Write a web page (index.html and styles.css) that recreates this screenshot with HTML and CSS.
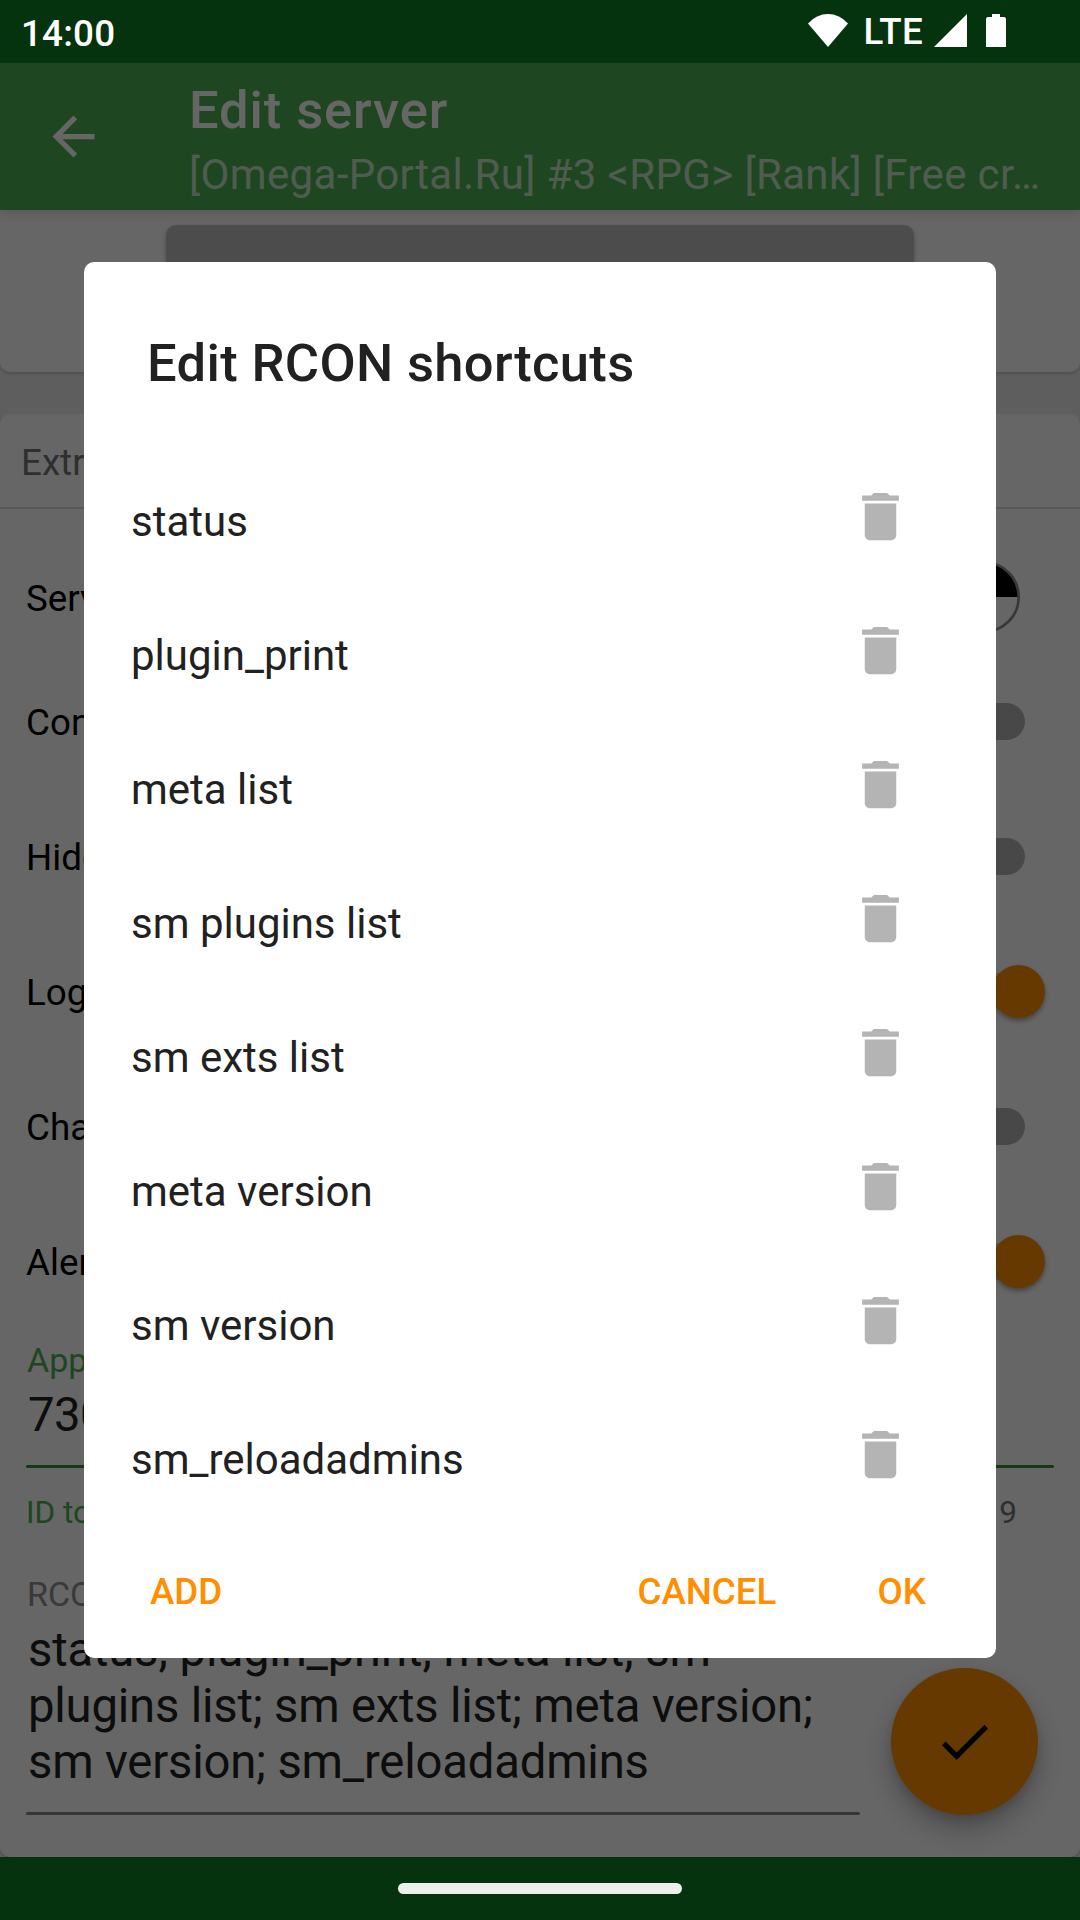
FILE: index.html
```html
<!DOCTYPE html>
<html lang="en">
<head>
<meta charset="utf-8">
<title>Edit server</title>
<link rel="stylesheet" href="styles.css">
</head>
<body>
<svg class="defs" width="0" height="0" aria-hidden="true">
  <symbol id="trash" viewBox="0 0 24 24"><path d="M6 19c0 1.1.9 2 2 2h8c1.1 0 2-.9 2-2V7H6v12zM19 4h-3.5l-1-1h-5l-1 1H5v2h14V4z"/></symbol>
</svg>
<div class="screen">
  <header class="status">
    <span class="clock">14:00</span>
    <svg class="wifi" width="40" height="33" viewBox="0 0 40 33"><path d="M0 9.500Q8.500 0 20 0T40 9.500L20 33z"/></svg>
    <span class="lte">LTE</span>
    <svg class="signal" width="33" height="33" viewBox="0 0 33 33"><path d="M0 33H33V0z"/></svg>
    <svg class="battery" width="20" height="33" viewBox="0 0 20 33"><path d="M6 0h8v3h4q2 0 2 2v28H0V5q0-2 2-2h4z"/></svg>
  </header>
  <div class="app">
    <div class="appbar">
      <svg class="back" viewBox="0 0 24 24"><path d="M20 11H7.830l5.590-5.590L12 4l-8 8 8 8 1.410-1.410L7.830 13H20v-2z"/></svg>
      <div class="heading">
        <div class="heading-title">Edit server</div>
        <div class="heading-sub">[Omega-Portal.Ru] #3 &lt;RPG&gt; [Rank] [Free cr…</div>
      </div>
    </div>
    <section class="card card-top"><div class="wide-button"></div></section>
    <section class="card card-extra">
      <h2 class="card-title">Extra</h2>
      <div class="settings">
        <div class="setting setting-color"><span>Server</span>
          <svg class="swatch" width="72" height="72" viewBox="0 0 72 72"><path d="M36 36V2A34 34 0 0 1 70 36z"/><circle cx="36" cy="36" r="34.700" fill="none" stroke="#8c8c8c" stroke-width="2.600"/></svg>
        </div>
        <div class="setting"><span>Connect</span><i class="switch"></i></div>
        <div class="setting"><span>Hide</span><i class="switch"></i></div>
        <div class="setting"><span>Log</span><i class="switch on"></i></div>
        <div class="setting"><span>Chat</span><i class="switch"></i></div>
        <div class="setting"><span>Alert</span><i class="switch on"></i></div>
      </div>
      <div class="field">
        <div class="label active">App</div>
        <div class="value">730</div>
        <div class="line active"></div>
        <div class="helper"><span>ID to</span><span class="count">9</span></div>
      </div>
      <div class="field field-rcon">
        <div class="label">RCON</div>
        <div class="value multi">status; plugin_print; meta list; sm plugins list; sm exts list; meta version; sm version; sm_reloadadmins</div>
        <div class="line"></div>
      </div>
    </section>
    <div class="fab"><svg viewBox="0 0 24 24"><path d="M9 16.170L4.830 12l-1.420 1.410L9 19 21 7l-1.410-1.410z"/></svg></div>
    <div class="scrim"></div>
  </div>
  <footer class="nav"><div class="handle"></div></footer>
  <div class="dialog">
    <h1 class="dialog-title">Edit RCON shortcuts</h1>
    <ul class="list">
      <li><span>status</span><svg><use href="#trash"/></svg></li>
      <li><span>plugin_print</span><svg><use href="#trash"/></svg></li>
      <li><span>meta list</span><svg><use href="#trash"/></svg></li>
      <li><span>sm plugins list</span><svg><use href="#trash"/></svg></li>
      <li><span>sm exts list</span><svg><use href="#trash"/></svg></li>
      <li><span>meta version</span><svg><use href="#trash"/></svg></li>
      <li><span>sm version</span><svg><use href="#trash"/></svg></li>
      <li><span>sm_reloadadmins</span><svg><use href="#trash"/></svg></li>
    </ul>
    <div class="actions"><span class="add">ADD</span><span class="cancel">CANCEL</span><span>OK</span></div>
  </div>
</div>
</body>
</html>
```
FILE: styles.css
```css
* { box-sizing: border-box; margin: 0; padding: 0; }
body { width: 1080px; height: 1920px; overflow: hidden; font-family: Roboto, sans-serif; }
svg { display: block; flex: none; }
.defs { position: absolute; }
.screen { position: relative; width: 1080px; height: 1920px; display: flex; flex-direction: column; }

/* system bars */
.status { height: 63px; background: #04330e; display: flex; align-items: flex-start; padding: 14px 74px 0 21px; color: #fff; fill: #fff; font-size: 36.750px; font-weight: 500; }
.clock { line-height: 39px; flex: 1; letter-spacing: .2px; }
.lte { line-height: 36px; margin: 0 11px 0 16px; letter-spacing: .3px; }
.signal { margin-right: 19px; }
.nav { height: 63px; background: #04330e; display: flex; justify-content: center; padding-top: 26px; }
.handle { width: 284px; height: 11px; border-radius: 6px; background: #ecefec; }

/* dimmed application */
.app { position: relative; height: 1794px; background: #ebebeb; overflow: hidden; }
.scrim { position: absolute; inset: 0; background: rgba(0,0,0,.6); }
.appbar { position: relative; height: 147px; background: #4caf50; display: flex; padding-left: 42px; box-shadow: 0 2px 12px rgba(0,0,0,.18); color: #fff; white-space: nowrap; }
.back { width: 63px; height: 63px; margin-top: 42px; margin-right: 84px; fill: #fff; }
.heading { padding-top: 16px; }
.heading-title { font-size: 52.500px; line-height: 62px; font-weight: 500; letter-spacing: .9px; }
.heading-sub { font-size: 42px; line-height: 50px; margin-top: 9px; letter-spacing: .36px; color: rgba(255,255,255,.7); }
.card { background: #fff; border-radius: 10px; box-shadow: 0 2px 3px rgba(0,0,0,.16); }
.card-top { height: 162px; margin-bottom: 42px; border-top-left-radius: 0; border-top-right-radius: 0; padding: 15px 166px 0; }
.wide-button { height: 105px; border-radius: 10px; background: #bdbdbd; box-shadow: 0 2px 5px rgba(0,0,0,.25); }
.card-extra { height: 1443px; }
.card-title { height: 95px; line-height: 97px; padding-left: 21px; font-size: 36.750px; font-weight: 400; color: #757575; border-bottom: 2px solid #dcdcdc; }
.settings { padding: 33px 35px 0 26px; }
.setting { height: 135px; display: flex; align-items: center; justify-content: space-between; font-size: 36.750px; color: #000; }
.setting-color { height: 113px; padding-right: 25px; }
.swatch { margin-bottom: 4px; }
.switch { width: 92px; height: 37px; margin-right: 20px; margin-bottom: 2px; border-radius: 19px; background: #b4b4b4; }
.switch.on { background: #ffd9a6; display: flex; align-items: center; justify-content: flex-end; margin-bottom: 3px; }
.switch.on::after { content: ""; flex: none; width: 53px; height: 53px; margin-right: -20px; border-radius: 50%; background: #ff8f00; box-shadow: 0 3px 5px rgba(0,0,0,.35); }
.field { padding: 10px 26px 0; }
.label { font-size: 34px; line-height: 40px; color: #8e8e8e; padding-left: 1px; }
.label.active { color: #4caf50; }
.value { font-size: 47.250px; line-height: 55px; margin: 8px 2px 22px; letter-spacing: -.6px; color: #212121; }
.line { height: 3px; border-radius: 2px; background: #858585; }
.line.active { background: #388e3c; }
.helper { display: flex; justify-content: space-between; font-size: 31.500px; line-height: 38px; margin-top: 26px; color: #4caf50; padding-right: 37px; }
.count { color: #757575; }
.field-rcon { width: 886px; padding-top: 42px; }
.value.multi { line-height: 56px; margin-top: 8px; margin-bottom: 22px; letter-spacing: -.2px; }
.fab { position: absolute; left: 891px; top: 1605px; width: 147px; height: 147px; border-radius: 50%; background: #ff8f00; display: grid; place-items: center; box-shadow: 0 14px 28px rgba(0,0,0,.26), 0 5px 10px rgba(0,0,0,.12); }
.fab svg { width: 63px; height: 63px; }

/* shortcuts dialog */
.dialog { position: absolute; left: 84px; top: 262px; width: 912px; height: 1396px; border-radius: 10px; background: #fff; color: #212121; padding-top: 70px; }
.dialog-title { font-size: 52.500px; line-height: 62px; font-weight: 500; letter-spacing: .35px; padding-left: 63px; margin-bottom: 60px; }
.list { list-style: none; }
.list li { height: 134px; display: flex; align-items: center; justify-content: space-between; padding: 0 84px 0 47px; font-size: 42px; }
.list svg { width: 63px; height: 63px; fill: #b4b4b4; margin-bottom: 10px; }
.actions { height: 131px; display: flex; align-items: center; padding: 0 70px 0 66px; color: #ff8f00; font-size: 36.750px; font-weight: 500; }
.add { flex: 1; }
.cancel { margin-right: 101px; }
```
